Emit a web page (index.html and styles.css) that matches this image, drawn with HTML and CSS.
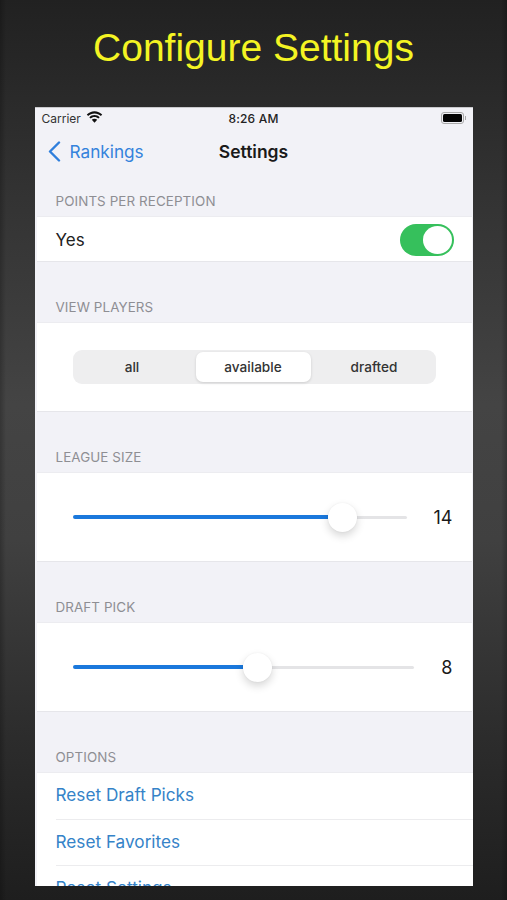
FILE: index.html
```html
<!DOCTYPE html>
<html lang="en">
<head>
<meta charset="utf-8">
<title>Configure Settings</title>
<link rel="stylesheet" href="styles.css">
</head>
<body>
<div class="shade"></div>
<h1 class="headline">Configure Settings</h1>
<main class="phone">
  <div class="status">
    <div class="status-left">
      <span>Carrier</span>
      <svg class="wifi" width="17" height="13" viewBox="0 0 17 13"><path d="M8.5 2.4c2.5 0 4.7 1 6.4 2.6l1.3-1.4C14.2 1.6 11.500.300 8.500.300S2.800 1.600.800 3.600l1.300 1.400C3.800 3.400 6 2.400 8.500 2.400z"/><path d="M8.500 6c1.500 0 2.900.600 3.900 1.600l1.300-1.400C12.300 4.800 10.500 4 8.500 4s-3.800.800-5.200 2.200l1.300 1.400C5.600 6.600 7 6 8.500 6z"/><path d="M8.500 7.700c-1.100 0-2 .400-2.700 1.100l2.700 3 2.700-3c-.700-.700-1.600-1.100-2.700-1.100z"/></svg>
    </div>
    <span class="time">8:26 AM</span>
    <div class="battery"><span class="battery-body"><span class="battery-fill"></span></span><span class="battery-cap"></span></div>
  </div>
  <nav class="navbar">
    <div class="back">
      <svg width="13" height="21" viewBox="0 0 13 21"><path d="M11 1.500 2 10.500l9 9" fill="none" stroke="#2f7fdc" stroke-width="2.400" stroke-linecap="round" stroke-linejoin="round"/></svg>
      <span>Rankings</span>
    </div>
    <div class="nav-title">Settings</div>
  </nav>

  <section class="group group-first">
    <h2 class="group-label">POINTS PER RECEPTION</h2>
    <div class="card card-switch">
      <span>Yes</span>
      <span class="switch"><span class="switch-knob"></span></span>
    </div>
  </section>

  <section class="group">
    <h2 class="group-label">VIEW PLAYERS</h2>
    <div class="card card-tall card-center">
      <div class="segments">
        <span class="segment segment-start">all</span>
        <span class="segment segment-on">available</span>
        <span class="segment segment-end">drafted</span>
      </div>
    </div>
  </section>

  <section class="group">
    <h2 class="group-label">LEAGUE SIZE</h2>
    <div class="card card-tall card-slider">
      <div class="slider">
        <span class="track-on" style="width:76.500%"></span>
        <span class="knob"></span>
        <span class="track-off"></span>
      </div>
      <span class="slider-value">14</span>
    </div>
  </section>

  <section class="group">
    <h2 class="group-label">DRAFT PICK</h2>
    <div class="card card-tall card-slider">
      <div class="slider">
        <span class="track-on" style="width:49.800%"></span>
        <span class="knob"></span>
        <span class="track-off"></span>
      </div>
      <span class="slider-value">8</span>
    </div>
  </section>

  <section class="group">
    <h2 class="group-label">OPTIONS</h2>
    <div class="card card-list">
      <div class="list-row">Reset Draft Picks</div>
      <div class="list-row">Reset Favorites</div>
      <div class="list-row">Reset Settings</div>
    </div>
  </section>
</main>
</body>
</html>
```
FILE: styles.css
```css
* { box-sizing: border-box; }
html, body { height: 100%; }
body {
  margin: 0;
  height: 900px;
  overflow: hidden;
  display: flex;
  flex-direction: column;
  align-items: center;
  background: linear-gradient(180deg, #212121 0%, #333 22%, #444 45%, #404040 60%, #2c2c2c 82%, #1e1e1e 100%);
  font-family: Inter, "Liberation Sans", sans-serif;
  position: relative;
}
.shade {
  position: absolute;
  inset: 0;
  background: linear-gradient(90deg, rgba(0,0,0,.22) 0, rgba(0,0,0,0) 6px, rgba(0,0,0,0) 501px, rgba(0,0,0,.22) 100%);
}
.headline {
  position: relative;
  margin: 0;
  height: 107px;
  padding-top: 27px;
  font: 400 39px/42px "Liberation Sans", sans-serif;
  color: #f4f423;
  text-align: center;
}
.phone {
  position: relative;
  width: 438px;
  height: 779px;
  overflow: hidden;
  background: #f2f2f7;
  border-top: 1px solid #c9c9cc;
  flex: none;
}
.status {
  height: 20px;
  padding: 0 7px 0 7px;
  display: flex;
  align-items: center;
  justify-content: space-between;
  position: relative;
  font-size: 12px;
  color: #333;
}
.status-left { display: flex; align-items: center; gap: 5px; }
.wifi { margin-top: -1px; fill: #111; }
.time {
  position: absolute;
  left: 0; right: 0;
  text-align: center;
  font-weight: 500;
  letter-spacing: .2px;
  color: #222;
}
.battery { display: flex; align-items: center; }
.battery-body {
  width: 23px; height: 12px;
  border: 1px solid #aaa;
  border-radius: 3px;
  padding: 1px;
  display: block;
}
.battery-fill { display: block; height: 100%; background: #050505; border-radius: 1.500px; }
.battery-cap { width: 1px; height: 4px; background: #aaa; margin-left: 1px; }
.navbar {
  height: 48px;
  padding-bottom: 2px;
  position: relative;
  display: flex;
  align-items: center;
  justify-content: center;
}
.back {
  position: absolute;
  left: 13px;
  display: flex;
  align-items: center;
  gap: 9px;
  font-size: 17.200px;
  color: #3583dc;
}
.nav-title { font-size: 17.500px; font-weight: 600; color: #1a1a1a; }
.group { padding-top: 37px; }
.group-first { padding-top: 17px; }
.group-label {
  margin: 0;
  height: 23px;
  padding-left: 21px;
  font-size: 13.400px;
  font-weight: 400;
  line-height: 16px;
  color: #8e8e93;
  letter-spacing: .1px;
}
.card {
  background: #fff;
  border-top: 1px solid #ececf0;
  border-bottom: 1px solid #e6e6ea;
  margin-left: 2px;
  margin-right: 1px;
}
.card-switch {
  height: 46px;
  padding: 1px 18px 0 19px;
  display: flex;
  align-items: center;
  justify-content: space-between;
  font-size: 17px;
  color: #222;
}
.switch {
  width: 54px; height: 32px;
  border-radius: 16px;
  background: #36c05c;
  padding: 2px;
  display: flex;
  justify-content: flex-end;
}
.switch-knob {
  width: 29px; height: 28px;
  border-radius: 50%;
  background: #fff;
}
.card-tall { height: 90px; }
.card-center { display: flex; align-items: center; padding: 0 36px; }
.segments {
  flex: 1;
  height: 34px;
  padding: 2px;
  border-radius: 9px;
  background: #eeeeef;
  display: grid;
  grid-template-columns: 121px 115px 1fr;
  align-items: center;
  text-align: center;
  font-size: 13.600px;
  font-weight: 500;
  color: #333;
}
.segment { line-height: 30px; }
.segment-start { padding-right: 6px; }
.segment-end { padding-left: 4px; }
.segment-on {
  background: #fff;
  border-radius: 7px;
  box-shadow: 0 1px 3px rgba(0,0,0,.14);
}
.card-slider {
  display: flex;
  align-items: center;
  padding: 0 19px 0 36px;
}
.slider { flex: 1; display: flex; align-items: center; }
.track-on { height: 4px; background: #1a78dc; border-radius: 2px 0 0 2px; flex: none; }
.track-off { height: 3px; background: #e4e4e6; border-radius: 0 2px 2px 0; flex: 1; }
.knob {
  width: 29px; height: 29px;
  flex: none;
  border-radius: 50%;
  background: #fff;
  box-shadow: 0 4px 9px rgba(0,0,0,.16), 0 0 2px rgba(0,0,0,.06);
  position: relative;
}
.slider-value {
  margin-left: 27px;
  font-size: 18px;
  color: #1a1a1a;
  text-align: right;
}
.card-list { border-bottom: 0; padding-left: 19px; margin-right: 0; }
.list-row {
  height: 46.500px;
  line-height: 44px;
  font-size: 17.200px;
  color: #3583c8;
  border-bottom: 1px solid #ececee;
}
```
